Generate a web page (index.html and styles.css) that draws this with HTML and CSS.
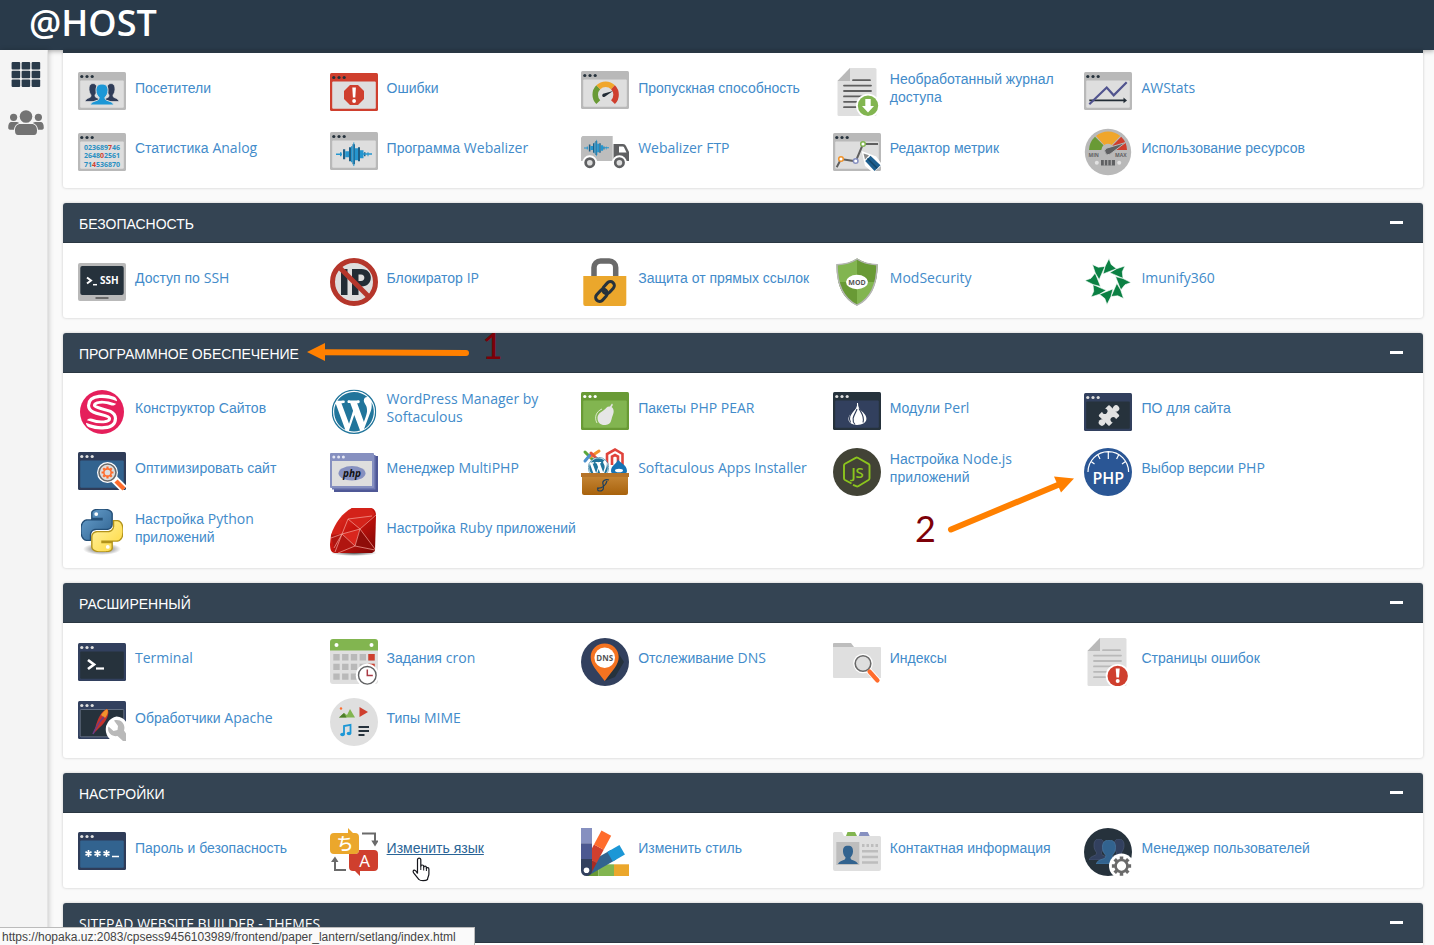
FILE: index.html
```html
<!DOCTYPE html>
<html lang="ru">
<head>
<meta charset="utf-8">
<title>@HOST</title>
<link rel="stylesheet" href="styles.css">
</head>
<body>
<svg class="defs" aria-hidden="true">
  <symbol id="win" viewBox="0 0 48 48">
    <rect y="4" width="48" height="38" rx="1.500" fill="currentColor"/>
    <rect x="2.200" y="12.500" width="43.600" height="27.300" rx="1" fill="var(--pane)" stroke="var(--edge, none)" stroke-width=".6"/>
    <g fill="var(--dot)"><circle cx="3.800" cy="8.500" r="1.600"/><circle cx="9" cy="8.500" r="1.600"/><circle cx="14.200" cy="8.500" r="1.600"/></g>
  </symbol>
  <symbol id="person" viewBox="0 0 24 22" preserveAspectRatio="none">
    <path d="M12 0c-4.500 0-6.200 3-6 7 0 3 1.500 5.500 3 7 0 2-.5 3-3 3.500C3 18.500 1 19.500 0 22h24c-1-2.500-3-3.500-6-4.500-2.500-.5-3-1.500-3-3.500 1.500-1.500 3-4 3-7 .2-4-1.500-7-6-7z"/>
  </symbol>
  <symbol id="wave" viewBox="0 0 36 24">
    <path fill="#1e5f86" d="M7 7h2.200v10H7zM13 5h2v14h-2zM16.500 2h2.500v20h-2.500zM22 5h2v14h-2zM28 10h1.500v4H28z"/>
    <path fill="#2596cf" d="M0 11.300h6v1.400H0zM4 10h1.500v4H4zM9.200 9h3.800v6H9.200zM15 4h1.500v16H15zM17.300 0h1v24h-1zM19 6h3v12h-3zM24 8h3.500v8H24zM27 11h9v1.500h-9zM31.500 10h1v4h-1z"/>
  </symbol>
  <symbol id="doc" viewBox="0 0 48 48">
    <path d="M17 0h25a1.500 1.500 0 0 1 1.500 1.500v45A1.500 1.500 0 0 1 42 48H6a1.500 1.500 0 0 1-1.500-1.500V13z" fill="#dfdfdf"/>
    <path d="M17 0v13H4.500z" fill="#b9b9b9"/>
    <path d="M20 12.200h17M11 17.600h27M11 23h27M11 28.400h27M11 33.800h27M11 39.200h16" stroke="currentColor" stroke-width="1.800" stroke-linecap="round"/>
  </symbol>
  <symbol id="wp" viewBox="0 0 20 20">
    <circle cx="10" cy="10" r="9.700" fill="#fff" stroke="#21759b" stroke-width=".6"/>
    <path fill="#21759b" d="M7.780 15.370L4.370 6.220c.55-.02 1.170-.08 1.170-.08.5-.06.44-1.130-.06-1.110 0 0-1.450.11-2.370.11-.18 0-.37 0-.58-.01C4.120 2.690 6.870 1.110 10 1.110c2.330 0 4.450.87 6.050 2.340-.68-.11-1.650.39-1.650 1.580 0 .74.45 1.360.9 2.100.35.61.55 1.360.55 2.460 0 1.490-1.400 5-1.400 5l-3.030-8.370c.54-.02.82-.17.82-.17.5-.05.44-1.250-.06-1.220 0 0-1.440.12-2.380.12-.87 0-2.330-.12-2.330-.12-.5-.03-.56 1.200-.06 1.220l.92.08 1.260 3.410zM17.410 10c.24-.64.74-1.870.43-4.250.7 1.290 1.050 2.710 1.050 4.250 0 3.290-1.730 6.240-4.400 7.780.97-2.590 1.940-5.200 2.920-7.780zM6.100 18.090C3.120 16.650 1.110 13.530 1.110 10c0-1.300.23-2.480.72-3.590C3.250 10.300 4.670 14.200 6.100 18.090zm4.030-6.630l2.580 6.980c-.86.29-1.760.45-2.710.45-.79 0-1.570-.11-2.290-.33.81-2.380 1.620-4.740 2.420-7.100z"/>
  </symbol>
  <symbol id="snake" viewBox="0 0 24 24">
    <path d="M14.250.18l.9.2.73.26.59.3.45.32.34.34.25.34.16.33.1.3.04.26.02.2-.01.13V8.500l-.05.63-.13.55-.21.46-.26.38-.3.31-.33.25-.35.19-.35.14-.33.1-.3.07-.26.04-.21.02H8.770l-.69.05-.59.14-.5.22-.41.27-.33.32-.27.35-.2.36-.15.37-.1.35-.07.32-.04.27-.02.21v3.060H3.170l-.21-.03-.28-.07-.32-.12-.35-.18-.36-.26-.36-.36-.35-.46-.32-.59-.28-.73-.21-.88-.14-1.050-.05-1.230.06-1.220.16-1.040.24-.87.32-.71.36-.57.4-.44.42-.33.42-.24.4-.16.36-.1.32-.05.24-.01h.16l.06.01h8.160v-.83H6.180l-.01-2.750-.02-.37.05-.34.11-.31.17-.28.25-.26.31-.23.38-.2.44-.18.51-.15.58-.12.64-.1.71-.06.77-.04.84-.02 1.270.05z"/>
    <circle cx="8.700" cy="2.900" r="1.100" fill="#fff" stroke="none"/>
  </symbol>
  <symbol id="blade" viewBox="-24 -24 48 48">
    <path d="M1-23L3.200-17 8.500-12.800-5-7.500-3-15z"/>
  </symbol>
  <symbol id="gear" viewBox="-12 -12 24 24">
    <circle r="6.800" fill="none" stroke="currentColor" stroke-width="3"/>
    <path stroke="currentColor" stroke-width="4" d="M0-7.500V-11M0 7.500V11M-7.500 0H-11M7.500 0H11M-5.300-5.300l-2.500-2.500M5.300 5.300l2.500 2.500M-5.300 5.300l-2.500 2.500M5.300-5.300l2.500-2.500"/>
  </symbol>
</svg>

<header class="topbar"><a class="brand" href="#">@HOST</a></header>

<div class="layout">
  <nav class="sidebar">
    <a class="side-link side-link-active" href="#" aria-label="Главная">
      <svg width="36" height="30" viewBox="0 0 36 30" fill="currentColor"><rect x="3.600" y="2" width="8.600" height="7.400" rx="1"/><rect x="13.600" y="2" width="8.600" height="7.400" rx="1"/><rect x="23.600" y="2" width="8.600" height="7.400" rx="1"/><rect x="3.600" y="10.800" width="8.600" height="7.400" rx="1"/><rect x="13.600" y="10.800" width="8.600" height="7.400" rx="1"/><rect x="23.600" y="10.800" width="8.600" height="7.400" rx="1"/><rect x="3.600" y="19.600" width="8.600" height="7.400" rx="1"/><rect x="13.600" y="19.600" width="8.600" height="7.400" rx="1"/><rect x="23.600" y="19.600" width="8.600" height="7.400" rx="1"/></svg>
    </a>
    <a class="side-link" href="#" aria-label="Пользователи">
      <svg width="36" height="26" viewBox="0 0 36 26" fill="currentColor"><circle cx="18" cy="6.500" r="6.300"/><circle cx="5.600" cy="7.300" r="3.600"/><circle cx="30.400" cy="7.300" r="3.600"/><path d="M12.500 14h11c3.500 0 5.500 2.500 5.500 6.500 0 3-1 4.500-3 4.500H10c-2 0-3-1.500-3-4.500 0-4 2-6.500 5.500-6.500zM3.600 12h4.800c1 0 2 .3 2.700 1-3 1.200-4.800 3.500-5.200 6.700H2c-1.200 0-1.800-.8-1.800-2.200C.2 14 1.200 12 3.600 12zM32.400 12h-4.800c-1 0-2 .3-2.700 1 3 1.200 4.800 3.500 5.200 6.700H34c1.200 0 1.800-.8 1.800-2.200 0-3.500-1-5.500-3.400-5.500z"/></svg>
    </a>
  </nav>

  <main class="content">
    <section class="panel panel-continued">
      <ul class="apps">
        <li class="app">
          <svg class="icon" viewBox="0 0 48 48"><use href="#win" class="win-grey"/><g stroke="#dedede"><use href="#person" x="7" y="15.500" width="16" height="18" fill="#2f3c58"/><use href="#person" x="25" y="15.500" width="16" height="18" fill="#2f3c58"/></g><use href="#person" x="12" y="16" width="24" height="21" fill="#1c97d6" stroke="#dedede"/></svg>
          <a class="label" href="#">Посетители</a></li>
        <li class="app">
          <svg class="icon" viewBox="0 0 48 48"><use href="#win" class="win-red" y="1"/><path d="M20 17h8l6 6v8l-6 6h-8l-6-6v-8z" fill="#cf3f2e"/><path d="M22.300 19.500h3.600l-.6 10h-2.400z" fill="#fff"/><circle cx="24.100" cy="33" r="1.900" fill="#fff"/></svg>
          <a class="label" href="#">Ошибки</a></li>
        <li class="app">
          <svg class="icon" viewBox="0 0 48 48"><use href="#win" class="win-grey" y="-1"/><g fill="none" stroke-width="5.500"><path d="M17.300 34.100A10.400 10.400 0 0 1 17.300 19.300" stroke="#699a35"/><path d="M17.300 19.300A10.400 10.400 0 0 1 32 19.300" stroke="#f0a62b"/><path d="M32 19.300A10.400 10.400 0 0 1 32 34.100" stroke="#cf3f2e"/></g><path d="M23 25.500l9-2.500-7.500 5.300a1.800 1.800 0 1 1-1.500-2.800z" fill="#222c35"/></svg>
          <a class="label" href="#">Пропускная способность</a></li>
        <li class="app">
          <svg class="icon" viewBox="0 0 48 48"><use href="#doc" color="#5f5f5f"/><circle cx="35" cy="37.700" r="12" fill="#fff"/><circle cx="35" cy="37.700" r="10.200" fill="#82b550"/><path d="M32.300 31h5.400v7h3.300l-6 6.500-6-6.500h3.300z" fill="#fff"/></svg>
          <a class="label" href="#">Необработанный журнал доступа</a></li>
        <li class="app">
          <svg class="icon" viewBox="0 0 48 48"><use href="#win" class="win-grey"/><path d="M5.300 32.400h35" stroke="#222c35" stroke-width="1.800"/><path d="M39.500 29.500l3.500 2.900-3.500 2.900z" fill="#222c35"/><path d="M5.300 36.300L22.700 19.500l7 7.800 13-13" fill="none" stroke="#51548f" stroke-width="2.200"/></svg>
          <a class="label latin" href="#">AWStats</a></li>
        <li class="app">
          <svg class="icon" viewBox="0 0 48 48"><use href="#win" class="win-grey" y="1"/><g class="icon-text" font-size="7" fill="#2a90c2"><text x="6" y="21.500">023689<tspan fill="#cf3f2e">7</tspan>46</text><text x="6" y="30">2648<tspan fill="#cf3f2e">0</tspan>2561</text><text x="6" y="38.500">71<tspan fill="#cf3f2e">4</tspan>536870</text></g></svg>
          <a class="label" href="#">Статистика <span class="latin">Analog</span></a></li>
        <li class="app">
          <svg class="icon" viewBox="0 0 48 48"><use href="#win" class="win-grey"/><use href="#wave" x="6" y="14.300" width="36" height="24"/></svg>
          <a class="label" href="#">Программа <span class="latin">Webalizer</span></a></li>
        <li class="app">
          <svg class="icon" viewBox="0 0 48 48"><path d="M1.500 8h30.200v25H0V9.500z" fill="#bdbdbd"/><use href="#wave" x="3" y="11.500" width="25" height="17"/><path d="M32.500 16H42c1.500 0 2.300.7 3 2l3 6v9H32.500z" fill="#5f6062"/><path d="M38 18.500h3.500c.8 0 1.200.3 1.600 1l2.400 5H38z" fill="#fff"/><g stroke="#fff" stroke-width="2"><circle cx="8.800" cy="34.700" r="6.500" fill="#5f6062"/><circle cx="38.400" cy="34.700" r="6.500" fill="#5f6062"/></g><circle cx="8.800" cy="34.700" r="2.800" fill="#dedede"/><circle cx="38.400" cy="34.700" r="2.800" fill="#dedede"/></svg>
          <a class="label latin" href="#">Webalizer FTP</a></li>
        <li class="app">
          <svg class="icon" viewBox="0 0 48 48"><use href="#win" class="win-grey" y="1"/><path d="M3.700 39.300L8 31l14.700 2.300L30 16h15" fill="none" stroke="#5f5f5f" stroke-width="2"/><g fill="#fff" stroke-width="1.500"><circle cx="8" cy="31" r="2.300" stroke="#f0932b"/><circle cx="22.700" cy="33" r="2.300" stroke="#8690c0"/><circle cx="30" cy="16" r="2.300" stroke="#82b550"/></g><path d="M28.700 23l14.500 5.500L48 35v3l-6 5h-4l-6-5z" fill="#fff"/><path d="M30.500 25.500l5.500 1.700-4 4.300z" fill="#8b8b8b"/><path d="M37.500 27.800l10 9.500-6 5.700-9.300-10z" fill="#1d5f8f"/><path d="M34.500 30.500l9.700 9.700" stroke="#144668" stroke-width="1.500"/></svg>
          <a class="label" href="#">Редактор метрик</a></li>
        <li class="app">
          <svg class="icon" viewBox="0 0 48 48"><circle cx="24" cy="24" r="23.200" fill="#b9b9b9"/><path d="M5 22a19 19 0 0 1 6-13.300l8.500 8.500A7 7 0 0 0 17.300 22z" fill="#699a35"/><path d="M12 8a18.500 18.500 0 0 1 24.200 0l-8.500 9a7 7 0 0 0-7.500 0z" fill="#f0a62b"/><path d="M37.200 8.700A19 19 0 0 1 43 22H31l-2.500-4.500z" fill="#cf3f2e"/><path d="M41.500 14.500L26 26.200a3 3 0 1 1-3.500-6z" fill="#5f6062" stroke="#b9b9b9"/><g class="icon-text" font-size="5" fill="#5f6062"><text x="4.500" y="29">MIN</text><text x="31" y="29">MAX</text></g><circle cx="12.800" cy="34.800" r="2" fill="#e2e2e2"/><circle cx="35.200" cy="34.800" r="2" fill="#e2e2e2"/><path d="M17 32h14v5.500H17z" fill="#5f6062"/><path d="M20.300 32v5.500M23.800 32v5.500M27.300 32v5.500" stroke="#b9b9b9"/></svg>
          <a class="label" href="#">Использование ресурсов</a></li>
      </ul>
    </section>

    <section class="panel">
      <header class="panel-head"><h2 class="panel-title">БЕЗОПАСНОСТЬ</h2><button class="collapse" type="button" aria-label="Свернуть"></button></header>
      <ul class="apps">
        <li class="app">
          <svg class="icon" viewBox="0 0 48 48"><rect y="5" width="48" height="38" rx="2" fill="#b9b9b9"/><rect x="2.300" y="8" width="43.400" height="29" rx="2" fill="#26323c"/><path d="M17.500 40h13" stroke="#6a6a6a" stroke-width="2"/><path d="M9 19.500l4 3-4 3" fill="none" stroke="#fff" stroke-width="2"/><path d="M15 26.700h4" stroke="#fff" stroke-width="1.500"/><text class="icon-text" x="22" y="26" font-size="10" fill="#fff">SSH</text></svg>
          <a class="label" href="#">Доступ по <span class="latin">SSH</span></a></li>
        <li class="app">
          <svg class="icon" viewBox="0 0 48 48"><circle cx="24" cy="24" r="21.500" fill="#dedede"/><path d="M11 11h6.500v26H11z" fill="#222c35"/><path d="M22 11h9.500c12.500 0 12.500 17.500 0 17.500H28.500V37H22zm6.500 5.500v6.500h2.500c4.500 0 4.500-6.500 0-6.500z" fill="#222c35"/><path d="M8.500 8.500l31 31" stroke="#b5362b" stroke-width="5"/><circle cx="24" cy="24" r="21.500" fill="none" stroke="#b5362b" stroke-width="5"/></svg>
          <a class="label" href="#">Блокиратор <span class="latin">IP</span></a></li>
        <li class="app">
          <svg class="icon" viewBox="0 0 48 48"><path d="M13 19V9.500A6.500 6.500 0 0 1 19.500 3h8.700a6.500 6.500 0 0 1 6.500 6.500V19" fill="none" stroke="#6a6a6a" stroke-width="5.500"/><path d="M2.300 18h43v28a2 2 0 0 1-2 2h-39a2 2 0 0 1-2-2z" fill="#eba72c"/><g transform="translate(24 33.500) rotate(-48)" fill="none" stroke="#26323c" stroke-width="3"><rect x="-12" y="-4" width="13.500" height="8" rx="4"/><rect x="-1.500" y="-4" width="13.500" height="8" rx="4"/></g></svg>
          <a class="label" href="#">Защита от прямых ссылок</a></li>
        <li class="app">
          <svg class="icon" viewBox="0 0 48 48"><path d="M24 .5C18 4.500 11 6.300 3.500 6.500 3.500 26 9 40 24 47.500 39 40 44.500 26 44.500 6.500 37 6.300 30 4.500 24 .5z" fill="#82b550"/><path d="M24 .5V24h18.500c1.500-5.500 2-11.500 2-17.500C37 6.300 30 4.500 24 .5zM24 24v23.500C14 42.500 8 35 5.500 24z" fill="#699a35"/><path d="M24 1C18 5 11 6.500 4 6.700 4 26 9.500 40 24 47.200 38.500 40 44 26 44 6.700 37 6.500 30 5 24 1z" fill="none" stroke="#b5b5b5" stroke-width="1.500"/><ellipse cx="24" cy="24" rx="11" ry="7.200" fill="#fff"/><text class="icon-text" x="24" y="26.700" text-anchor="middle" font-size="7" fill="#555">MOD</text></svg>
          <a class="label latin" href="#">ModSecurity</a></li>
        <li class="app">
          <svg class="icon" viewBox="-24 -23.500 48 48" fill="#0b8043" stroke="#fff" stroke-width=".6"><g><use href="#blade" x="-24" y="-24" width="48" height="48"/></g><g transform="rotate(45)"><use href="#blade" x="-24" y="-24" width="48" height="48"/></g><g transform="rotate(90)"><use href="#blade" x="-24" y="-24" width="48" height="48"/></g><g transform="rotate(135)"><use href="#blade" x="-24" y="-24" width="48" height="48"/></g><g transform="rotate(180)"><use href="#blade" x="-24" y="-24" width="48" height="48"/></g><g transform="rotate(225)"><use href="#blade" x="-24" y="-24" width="48" height="48"/></g><g transform="rotate(270)"><use href="#blade" x="-24" y="-24" width="48" height="48"/></g><g transform="rotate(315)"><use href="#blade" x="-24" y="-24" width="48" height="48"/></g></svg>
          <a class="label latin" href="#">Imunify360</a></li>
      </ul>
    </section>

    <section class="panel">
      <header class="panel-head"><h2 class="panel-title">ПРОГРАММНОЕ ОБЕСПЕЧЕНИЕ</h2><button class="collapse" type="button" aria-label="Свернуть"></button></header>
      <ul class="apps">
        <li class="app">
          <svg class="icon" viewBox="0 0 48 48"><circle cx="24" cy="24" r="22" fill="#e51f5b"/><g fill="none" stroke-linecap="round"><path d="M34.500 13C27 10 13.500 10 13.500 17.500S34.500 22.500 34.500 30.500 20 38 12.500 35" stroke="#fff" stroke-width="9"/><path d="M38.500 14.500C27 10 13.500 10 13.500 17.500S34.500 22.500 34.500 30.500 20 38 8.500 33.500" stroke="#e51f5b" stroke-width="2.800"/></g></svg>
          <a class="label" href="#">Конструктор Сайтов</a></li>
        <li class="app">
          <svg class="icon" viewBox="0 0 48 48"><use href="#wp" x="1.700" y="1.400" width="44.600" height="44.600"/></svg>
          <a class="label latin" href="#">WordPress Manager by Softaculous</a></li>
        <li class="app">
          <svg class="icon" viewBox="0 0 48 48"><use href="#win" class="win-green"/><path d="M31 15.500c1.500 1 .5 2.500-.5 3.500 3 2 2.500 6 1 9-1.500 3.500-.5 8-7 9-4.500.5-8-2-8-7 0-4.500 4-6 6.500-8 2-1.500 3-4 6-3.500.8-1 1.200-2 2-3z" fill="#e6e6e6"/><path d="M21 21c-6 2.500-8 8.500-5 14" fill="none" stroke="#dcebc9"/></svg>
          <a class="label" href="#">Пакеты <span class="latin">PHP PEAR</span></a></li>
        <li class="app">
          <svg class="icon" viewBox="0 0 48 48"><use href="#win" class="win-ink"/><path d="M24 15c.4 4-1 6-4 8.500-7 5.500-6 13 4 13.500 11-.5 12-8 5-13.500-3-2.500-4-4.500-4-8.500z" fill="#fff"/><path d="M24 21c-1 4-7 10-2 15.500M22 20c-2 4-8 8-4.500 14.500M26 20.500c2 4 6 8 4 14" fill="none" stroke="#2f3c58" stroke-width="1.100"/></svg>
          <a class="label" href="#">Модули <span class="latin">Perl</span></a></li>
        <li class="app">
          <svg class="icon" viewBox="0 0 48 48"><use href="#win" class="win-navy" y="1"/><g transform="translate(25 27.500) rotate(45)"><g fill="#e2e2e2"><rect x="-7.500" y="-7.500" width="15" height="15" rx="1"/><circle cy="-10" r="3.200"/><circle cy="10" r="3.200"/></g><g fill="#26323c"><circle cx="-6" r="2.700"/><circle cx="6" r="2.700"/></g></g></svg>
          <a class="label" href="#">ПО для сайта</a></li>

        <li class="app">
          <svg class="icon" viewBox="0 0 48 48"><use href="#win" class="win-blue"/><circle cx="29.500" cy="24.500" r="10.500" fill="#fff"/><path d="M36 31l10 10" stroke="#fff" stroke-width="8"/><circle cx="29.500" cy="24.500" r="8.500" fill="#dedede" stroke="#6a6a6a" stroke-width="1.600"/><path d="M38 33l8 8" stroke="#ff6c2c" stroke-width="4.500"/><use href="#gear" x="23" y="18" width="13" height="13" color="#ff6c2c"/></svg>
          <a class="label" href="#">Оптимизировать сайт</a></li>
        <li class="app">
          <svg class="icon" viewBox="0 0 48 48"><path d="M4 8h44v36H4z" fill="#4f5896"/><path d="M2 7h43.500v34.500H2z" fill="#6f79b2"/><rect y="5" width="44" height="35" rx="1" fill="#8690c0"/><path d="M2 13h40v25H2z" fill="#dedede"/><g fill="#e4e6f3"><circle cx="3.800" cy="9" r="1.500"/><circle cx="8.600" cy="9" r="1.500"/><circle cx="13.400" cy="9" r="1.500"/></g><ellipse cx="22" cy="25.300" rx="13.500" ry="7.300" fill="#8690c0"/><text class="icon-text icon-italic" x="22" y="28.500" text-anchor="middle" font-size="10" fill="#111">php</text></svg>
          <a class="label" href="#">Менеджер <span class="latin">MultiPHP</span></a></li>
        <li class="app">
          <svg class="icon" viewBox="0 0 48 48"><defs><linearGradient id="box" x2="0" y2="1"><stop stop-color="#c98a3a"/><stop offset="1" stop-color="#a8620c"/></linearGradient></defs><g fill="none" stroke-width="3" stroke-linecap="round"><path d="M4 4l9 9" stroke="#5aa63c"/><path d="M18 3L9 9" stroke="#f0932b"/><path d="M4 13l5-6" stroke="#4b90cd"/><path d="M10 5l7 7" stroke="#e5523a"/></g><path d="M26 17V6l8-4.500L41.500 6v11M31 17V8.500L34 7l3 1.500V17" fill="none" stroke="#e0433b" stroke-width="2.600"/><use href="#wp" x="7" y="9" width="21" height="21"/><path d="M37 11c1 4 9 5 9 12 0 6-16 6-16 0s6-7 7-12z" fill="#1673b5"/><ellipse cx="38" cy="22.500" rx="4" ry="1.800" fill="#fff"/><path d="M1 25h46v20a2 2 0 0 1-2 2H3a2 2 0 0 1-2-2z" fill="url(#box)"/><path d="M0 25h48v4H0z" fill="#b57328"/><path d="M28 32c-4-1-7 1-6 4s1 7-3 7c-3 0-3-2-1-3M16 40c5 1 9-3 10-7" fill="none" stroke="#1d3f5e" stroke-width="1.200"/></svg>
          <a class="label latin" href="#">Softaculous Apps Installer</a></li>
        <li class="app">
          <svg class="icon" viewBox="0 0 48 48"><circle cx="24" cy="24" r="24" fill="#424336"/><path d="M18.500 35.500l-6.500-3.500a2 2 0 0 1-1-1.700V17.500a2 2 0 0 1 1-1.700l10.700-6a2 2 0 0 1 2 0l10.800 6a2 2 0 0 1 1 1.700v12.800a2 2 0 0 1-1 1.700l-10.300 6.200a2 2 0 0 1-2 0L20 36.800" fill="none" stroke="#8cc51d" stroke-width="1.900"/><text class="icon-text icon-semibold" x="24.500" y="29.500" text-anchor="middle" font-size="15" fill="#8cc51d">JS</text></svg>
          <a class="label" href="#">Настройка <span class="latin">Node.js</span> приложений</a></li>
        <li class="app">
          <svg class="icon" viewBox="0 0 48 48"><circle cx="24" cy="24" r="24" fill="#2a5695"/><path d="M4 24a20.300 20.300 0 0 1 40.600 0M24.300 4v7M14 7l2 4M34.600 7l-2 4M7 13.500l3.500 2.500M41.500 13.500L38 16" fill="none" stroke="#fff" stroke-width="1.200"/><text class="icon-text icon-semibold" x="24.300" y="35.500" text-anchor="middle" font-size="16" fill="#fff">PHP</text></svg>
          <a class="label" href="#">Выбор версии <span class="latin">PHP</span></a></li>

        <li class="app">
          <svg class="icon" viewBox="0 0 48 48"><defs><radialGradient id="shade"><stop stop-color="#222" stop-opacity=".8"/><stop offset="1" stop-color="#222" stop-opacity="0"/></radialGradient><linearGradient id="py1" x2="1" y2="1"><stop stop-color="#6ba3d0"/><stop offset="1" stop-color="#2c5f8d"/></linearGradient><linearGradient id="py2" x2="1" y2="1"><stop stop-color="#ffd83a"/><stop offset="1" stop-color="#fff3a8"/></linearGradient></defs><ellipse cx="24" cy="41" rx="19" ry="6" fill="url(#shade)"/><g stroke-width=".8"><use href="#snake" x="3" y="1" width="42" height="42" fill="url(#py1)" stroke="#244f77"/><use href="#snake" x="3" y="1" width="42" height="42" transform="rotate(180 24 22.500)" fill="url(#py2)" stroke="#b3941b"/></g></svg>
          <a class="label" href="#">Настройка <span class="latin">Python</span> приложений</a></li>
        <li class="app">
          <svg class="icon" viewBox="0 0 48 48"><defs><linearGradient id="rb" x2="1" y2="1"><stop stop-color="#e8392c"/><stop offset=".5" stop-color="#c4120c"/><stop offset="1" stop-color="#7a0705"/></linearGradient></defs><ellipse cx="24" cy="45" rx="23" ry="3" fill="url(#shade)"/><path d="M22 0h19c4 1 5 4 5 8l-1 35-3 2H5c-4 0-5-4-5-9l1-9C5 15 12 5 22 0z" fill="url(#rb)"/><path d="M22 0L9 12l9-1 12 10 15-15-4-6zM9 12L1 27l11-1z" fill="#d32219"/><path d="M12 26l18-5-5 17z" fill="#d9261d"/><path d="M30 21l15 20-20-3z" fill="#8f0d09"/><path d="M1 27l11-1 13 12-20 7z" fill="#b01510"/><path d="M1 30l11-4 18-5L46 7M18 11l12 10 15 20M12 26l6-15 24-3M12 26l13 12 5-17M12 26L5 44M25 38L8 45M25 38l20 4M12 26L4 40" fill="none" stroke="#f6a59c" stroke-width=".7"/></svg>
          <a class="label" href="#">Настройка <span class="latin">Ruby</span> приложений</a></li>
      </ul>
    </section>

    <section class="panel">
      <header class="panel-head"><h2 class="panel-title">РАСШИРЕННЫЙ</h2><button class="collapse" type="button" aria-label="Свернуть"></button></header>
      <ul class="apps">
        <li class="app">
          <svg class="icon" viewBox="0 0 48 48"><use href="#win" class="win-navy" y="1"/><path d="M10 22l6 4.500-6 4.500" fill="none" stroke="#fff" stroke-width="2.700"/><path d="M18 30.500h8" stroke="#fff" stroke-width="2.200"/></svg>
          <a class="label latin" href="#">Terminal</a></li>
        <li class="app">
          <svg class="icon" viewBox="0 0 48 48"><path d="M0 12h48v31a3 3 0 0 1-3 3H3a3 3 0 0 1-3-3z" fill="#dfdfdf"/><path d="M3 1h42a3 3 0 0 1 3 3v8.500H0V4a3 3 0 0 1 3-3z" fill="#82b550"/><circle cx="6.500" cy="7" r="2" fill="#fff"/><circle cx="41.500" cy="7" r="2" fill="#fff"/><path d="M6.500 16v26M15.300 16v26M24 16v26M32.800 16v26M41.500 16v26" stroke="#b9b9b9" stroke-width="6.400" stroke-dasharray="6.400 3.300"/><path d="M38.300 16h6.400v6.400h-6.400zM38.300 25.700h6.400v6.400h-6.400z" fill="#cf3f2e"/><circle cx="37.300" cy="37.300" r="11.500" fill="#fff"/><circle cx="37.300" cy="37.300" r="8.800" fill="#fff" stroke="#5f6062" stroke-width="1.400"/><path d="M37.300 31.500v6h5.500" fill="none" stroke="#aa3a44" stroke-width="1.500"/></svg>
          <a class="label" href="#">Задания <span class="latin">cron</span></a></li>
        <li class="app">
          <svg class="icon" viewBox="0 0 48 48"><circle cx="24" cy="24" r="24" fill="#32405e"/><path d="M34 10c6 7 4 14-10 33l10-4 9-15z" fill="#26323c"/><path d="M23.700 5.500c-8 0-14 6-14 13.500 0 8 6 13 14 24 8-11 14-16 14-24 0-7.500-6-13.500-14-13.500z" fill="#f47321"/><circle cx="23.700" cy="19.800" r="10.300" fill="#fff"/><text class="icon-text" x="23.700" y="22.600" text-anchor="middle" font-size="8" fill="#555">DNS</text></svg>
          <a class="label" href="#">Отслеживание <span class="latin">DNS</span></a></li>
        <li class="app">
          <svg class="icon" viewBox="0 0 48 48"><path d="M0 12V6a1 1 0 0 1 1-1h17l3 4v3z" fill="#bdbdbd"/><path d="M0 9h47a1 1 0 0 1 1 1v30H1a1 1 0 0 1-1-1z" fill="#dfdfdf"/><circle cx="30" cy="25.500" r="9.800" fill="#fff"/><path d="M34.500 31L46 44" stroke="#fff" stroke-width="6"/><circle cx="30" cy="25.500" r="7.800" fill="#dedede" stroke="#6a6a6a" stroke-width="1.600"/><path d="M36.500 33.500l8 9" stroke="#ff6c2c" stroke-width="4.200" stroke-linecap="round"/></svg>
          <a class="label" href="#">Индексы</a></li>
        <li class="app">
          <svg class="icon" viewBox="0 0 48 48"><use href="#doc" x="-1" color="#b9b9b9"/><circle cx="33.700" cy="38" r="12" fill="#fff"/><circle cx="33.700" cy="38" r="10.200" fill="#cf3f2e"/><path d="M31.700 30.500h4l-.7 9h-2.600z" fill="#fff"/><circle cx="33.700" cy="43" r="2" fill="#fff"/></svg>
          <a class="label" href="#">Страницы ошибок</a></li>
        <li class="app">
          <svg class="icon" viewBox="0 0 48 48"><use href="#win" class="win-navy win-edged" y="-1"/><path d="M29 11c4 3-1 14-8 19l-5 5 2-8c2-6 5-14 11-16z" fill="#c5332c"/><path d="M29 11c2 2 0 7-2 9l-4-3c2-3 4-5 6-6z" fill="#f0932b"/><path d="M26 19c-5 5-8 10-11 17" fill="none" stroke="#6b3c86" stroke-width="1.500"/><path d="M38.500 18.500a13 13 0 0 1 11 8V43l-6 1.500a13 13 0 1 1-5-26z" fill="#fff"/><path d="M36 22.500c7-2 12 4 10 10l3 4.500v6h-4l-5.500-5c-6 1-11-4-9-9.500l5 4.500 4-1 .5-4z" fill="#b9b9b9"/></svg>
          <a class="label" href="#">Обработчики <span class="latin">Apache</span></a></li>
        <li class="app">
          <svg class="icon" viewBox="0 0 48 48"><circle cx="24" cy="24" r="24" fill="#dfdfdf"/><path d="M9 19.500l5-4.500 3 2 3-6 5 8.500z" fill="#82b550"/><path d="M9 19.500l5-4.500 2.500 4.500z" fill="#4d7d2a"/><circle cx="11" cy="10.500" r="1.200" fill="#ff6c2c"/><path d="M29.500 9v10l8.500-5z" fill="#cf3f2e"/><path d="M14 36.500v-8.500l6.500-1.200v8.500" fill="none" stroke="#1c97d6" stroke-width="1.800"/><ellipse cx="12.500" cy="36.500" rx="2.300" ry="1.800" fill="#1c97d6"/><ellipse cx="19" cy="35.500" rx="2.300" ry="1.800" fill="#1c97d6"/><path d="M28.500 29H39M28.500 33H39M28.500 37h6" stroke="#26323c" stroke-width="2"/></svg>
          <a class="label" href="#">Типы <span class="latin">MIME</span></a></li>
      </ul>
    </section>

    <section class="panel">
      <header class="panel-head"><h2 class="panel-title">НАСТРОЙКИ</h2><button class="collapse" type="button" aria-label="Свернуть"></button></header>
      <ul class="apps">
        <li class="app">
          <svg class="icon" viewBox="0 0 48 48"><use href="#win" class="win-blue"/><path d="M10.500 22v7M7.500 23.800l6 3.400M13.500 23.800l-6 3.400M19.500 22v7M16.500 23.800l6 3.400M22.500 23.800l-6 3.400M28.500 22v7M25.500 23.800l6 3.400M31.500 23.800l-6 3.400M34 28.500h7" stroke="#fff" stroke-width="1.600"/></svg>
          <a class="label" href="#">Пароль и безопасность</a></li>
        <li class="app">
          <svg class="icon" viewBox="0 0 48 48"><path d="M4 5h14V0l5 5h2a4 4 0 0 1 4 4v13a4 4 0 0 1-4 4H4a4 4 0 0 1-4-4V9a4 4 0 0 1 4-4z" fill="#eba72c"/><path d="M29 22h15a4 4 0 0 1 4 4v13a4 4 0 0 1-4 4H30v5l-5-5h-2a4 4 0 0 1-4-4V26h6a4 4 0 0 0 4-4z" fill="#cf3f2e"/><path d="M32 5.500h13V14M16 42H5V33" fill="none" stroke="#6a6a6a" stroke-width="2"/><path d="M41.300 12.500h7.400L45 18.500zM1 34h7.500L5 28.500z" fill="#6a6a6a"/><text class="icon-cjk" x="15" y="21.500" text-anchor="middle" font-size="17" fill="#fff">ち</text><text class="icon-text icon-regular" x="34.700" y="38.500" text-anchor="middle" font-size="17" fill="#fff">A</text></svg>
          <a class="label label-hover" href="#">Изменить язык
            <svg class="cursor" width="18" height="25" viewBox="0 0 18 25"><path d="M5.500 16.500V2.500a1.700 1.700 0 0 1 3.300 0v7c0-2 2.900-2 2.900 0v1c0-1.900 2.700-1.700 2.700.2v1c0-1.700 2.500-1.500 2.500.3v5c0 2-1.400 3.500-1.400 5.500-1.500 1.500-7.500 1.500-8.500 0L2 16.500c-1.500-2-1-3.300.5-3.300 1 0 2 1.300 3 3.300z" fill="#fff" stroke="#15161c" stroke-width="1.200"/><path d="M8.800 9v4M11.700 10v3.500M14.400 11v3" stroke="#15161c"/></svg>
          </a></li>
        <li class="app">
          <svg class="icon" viewBox="0 0 48 48"><path d="M5 36.300h12.300V48H5z" fill="#699a35"/><path d="M17.300 36.300H33V48H17.300z" fill="#82b550"/><path d="M33 36.300h15V48H33z" fill="#eba72c"/><g transform="rotate(60 5.300 42.300)"><path d="M0 11h11v31H0z" fill="#32638f"/><path d="M0 1h11v14H0z" fill="#1c97d6"/></g><g transform="rotate(28 5.300 42.300)"><path d="M0 31h11v12H0z" fill="#a82a22"/><path d="M0 16h11v15H0z" fill="#cf3f2e"/><path d="M0 0h11v16H0z" fill="#ff6c2c"/></g><path d="M0 0h11v15.300H0z" fill="#8690c0"/><path d="M0 15.300h11V31H0z" fill="#4c5891"/><path d="M0 31h11v11.500A5.500 5.500 0 0 1 0 42.500z" fill="#32405e"/><circle cx="5.500" cy="42.300" r="2.800" fill="#fff"/></svg>
          <a class="label" href="#">Изменить стиль</a></li>
        <li class="app">
          <svg class="icon" viewBox="0 0 48 48"><path d="M0 8V5.500A1.500 1.500 0 0 1 1.500 4H9l2 4h35.500A1.500 1.500 0 0 1 48 9.500V41a2 2 0 0 1-2 2H2a2 2 0 0 1-2-2z" fill="#dfdfdf"/><path d="M13 8l1.500-4H22l2 4z" fill="#82b550"/><path d="M25.700 8l1.500-4h7.500l2 4z" fill="#8690c0"/><path d="M3.300 14h23v23h-23z" fill="#bdbdbd"/><use href="#person" x="5" y="17.500" width="20" height="18.500" fill="#32638f"/><path d="M29 17.500h16" stroke="#bdbdbd" stroke-width="3" stroke-dasharray="2.500 2"/><path d="M29 23.300h16M29 29h16M29 34.500h16" stroke="#bdbdbd" stroke-width="2.400"/></svg>
          <a class="label" href="#">Контактная информация</a></li>
        <li class="app">
          <svg class="icon" viewBox="0 0 48 48"><circle cx="24" cy="24" r="24" fill="#26323c"/><g stroke="#536080" stroke-width=".6"><use href="#person" x="5" y="11" width="20" height="21" fill="#32405e"/><use href="#person" x="25" y="11" width="20" height="21" fill="#32405e"/></g><use href="#person" x="12" y="12" width="26" height="24" fill="#32638f" stroke="#4b7ba6" stroke-width=".6"/><circle cx="37.500" cy="38" r="12.500" fill="#fff"/><use href="#gear" x="27" y="27.500" width="21" height="21" color="#6a6a6a"/></svg>
          <a class="label" href="#">Менеджер пользователей</a></li>
      </ul>
    </section>

    <section class="panel">
      <header class="panel-head"><h2 class="panel-title latin">SITEPAD WEBSITE BUILDER - THEMES</h2><button class="collapse" type="button" aria-label="Свернуть"></button></header>
      <ul class="apps"></ul>
    </section>
  </main>
</div>

<div class="notes">
  <svg class="note-lines" width="1434" height="945" viewBox="0 0 1434 945" fill="#ff8000" stroke="#ff8000"><path d="M324 352.300l142 .7M951 529.500l108-45" stroke-width="6" stroke-linecap="round"/><path d="M307 352l18-9v18zM1074 478.500l-20-2 7 16z" stroke="none"/></svg>
  <span class="note note-one">1</span>
  <span class="note note-two">2</span>
</div>

<div class="statusbar">https://hopaka.uz:2083/cpsess9456103989/frontend/paper_lantern/setlang/index.html</div>
</body>
</html>
```
FILE: styles.css
```css
* { box-sizing: border-box; }

body {
  margin: 0;
  height: 100vh;
  display: flex;
  flex-direction: column;
  overflow: hidden;
  background: #fafafa;
  font: 14px/18px "Liberation Sans", Arial, sans-serif;
}

.latin { font-family: "Open Sans", sans-serif; }
.defs { position: absolute; width: 0; height: 0; }

.topbar {
  flex: none;
  height: 50px;
  padding: 0 29px;
  background: #293a4a;
  box-shadow: 0 1px 5px rgba(0, 0, 0, .35);
}

.brand {
  color: #fff;
  font: 600 36px/46px "Open Sans", sans-serif;
  text-decoration: none;
}

.layout {
  flex: 1;
  min-height: 0;
  display: flex;
}

.sidebar {
  flex: none;
  width: 48px;
  padding: 10px 0 0 8px;
  display: flex;
  flex-direction: column;
  gap: 20px;
  background: #f4f4f4;
  border-right: 1px solid #e4e4e4;
  box-shadow: 1px 0 5px rgba(0, 0, 0, .2);
}

.side-link { color: #737373; }
.side-link-active { color: #293a4a; }
.side-link svg { display: block; }

.content {
  flex: 1;
  min-width: 0;
  padding: 0 11px 0 15px;
}

.panel {
  margin-bottom: 15px;
  border-radius: 3px;
  background: #fff;
  box-shadow: 0 0 3px rgba(0, 0, 0, .2);
}

.panel-continued {
  position: relative;
  border-top: 3px solid #293743;
  border-radius: 0 0 3px 3px;
}

.panel-head {
  height: 40px;
  padding: 2px 20px 0 16px;
  display: flex;
  align-items: center;
  justify-content: space-between;
  border-bottom: 1px solid #2a3742;
  border-radius: 3px 3px 0 0;
  background: #344453;
}

.panel-title {
  margin: 0;
  color: #fff;
  font-size: 14px;
  line-height: 18px;
  font-weight: 400;
}

.collapse {
  width: 13px;
  height: 16px;
  margin-bottom: 2px;
  padding: 0;
  border: 0;
  background: linear-gradient(#fff, #fff) center / 13px 3px no-repeat;
}

.apps {
  margin: 0;
  padding: 15px 87px 20px 15px;
  display: grid;
  grid-template-columns: repeat(5, 1fr);
  grid-auto-rows: 40px;
  row-gap: 20px;
  list-style: none;
}

.app {
  display: flex;
  align-items: center;
  gap: 9px;
  min-width: 0;
}

.icon {
  flex: none;
  align-self: flex-start;
  width: 48px;
  height: 48px;
}

.label {
  position: relative;
  color: #428bca;
  text-decoration: none;
}

.label-hover {
  color: #2a6496;
  text-decoration: underline;
}

.cursor {
  position: absolute;
  left: 25px;
  top: 18px;
}

.win-grey { color: #b9b9b9; --pane: #dedede; --dot: #26323c; }
.win-red { color: #cf3f2e; --pane: #dedede; --dot: #26323c; }
.win-green { color: #699a35; --pane: #82b550; --dot: #fff; }
.win-ink { color: #26323c; --pane: #32405e; --dot: #dedede; }
.win-navy { color: #32405e; --pane: #26323c; --dot: #dedede; }
.win-blue { color: #2f3c58; --pane: #32638f; --dot: #dedede; }
.win-edged { --edge: #8a93a8; }

.icon-text { font-family: "Open Sans", sans-serif; font-weight: 700; }
.icon-semibold { font-weight: 600; }
.icon-regular { font-weight: 400; }
.icon-italic { font-style: italic; }
.icon-cjk { font-family: "Noto Sans CJK JP", sans-serif; font-weight: 500; }

.notes {
  position: absolute;
  inset: 0;
  overflow: hidden;
  pointer-events: none;
}

.note-lines { display: block; }

.note {
  position: absolute;
  color: #7d0008;
  font: 36px/36px Lato, sans-serif;
}

.note-one { left: 482px; top: 327px; }
.note-two { left: 915px; top: 510px; }

.statusbar {
  position: absolute;
  left: 0;
  bottom: 0;
  padding: 2px 18px 0 2px;
  border: 1px solid #bbb;
  border-width: 1px 1px 0 0;
  background: #fafafa;
  color: #444;
  font: 12px/15px "Liberation Sans", Arial, sans-serif;
}
```
